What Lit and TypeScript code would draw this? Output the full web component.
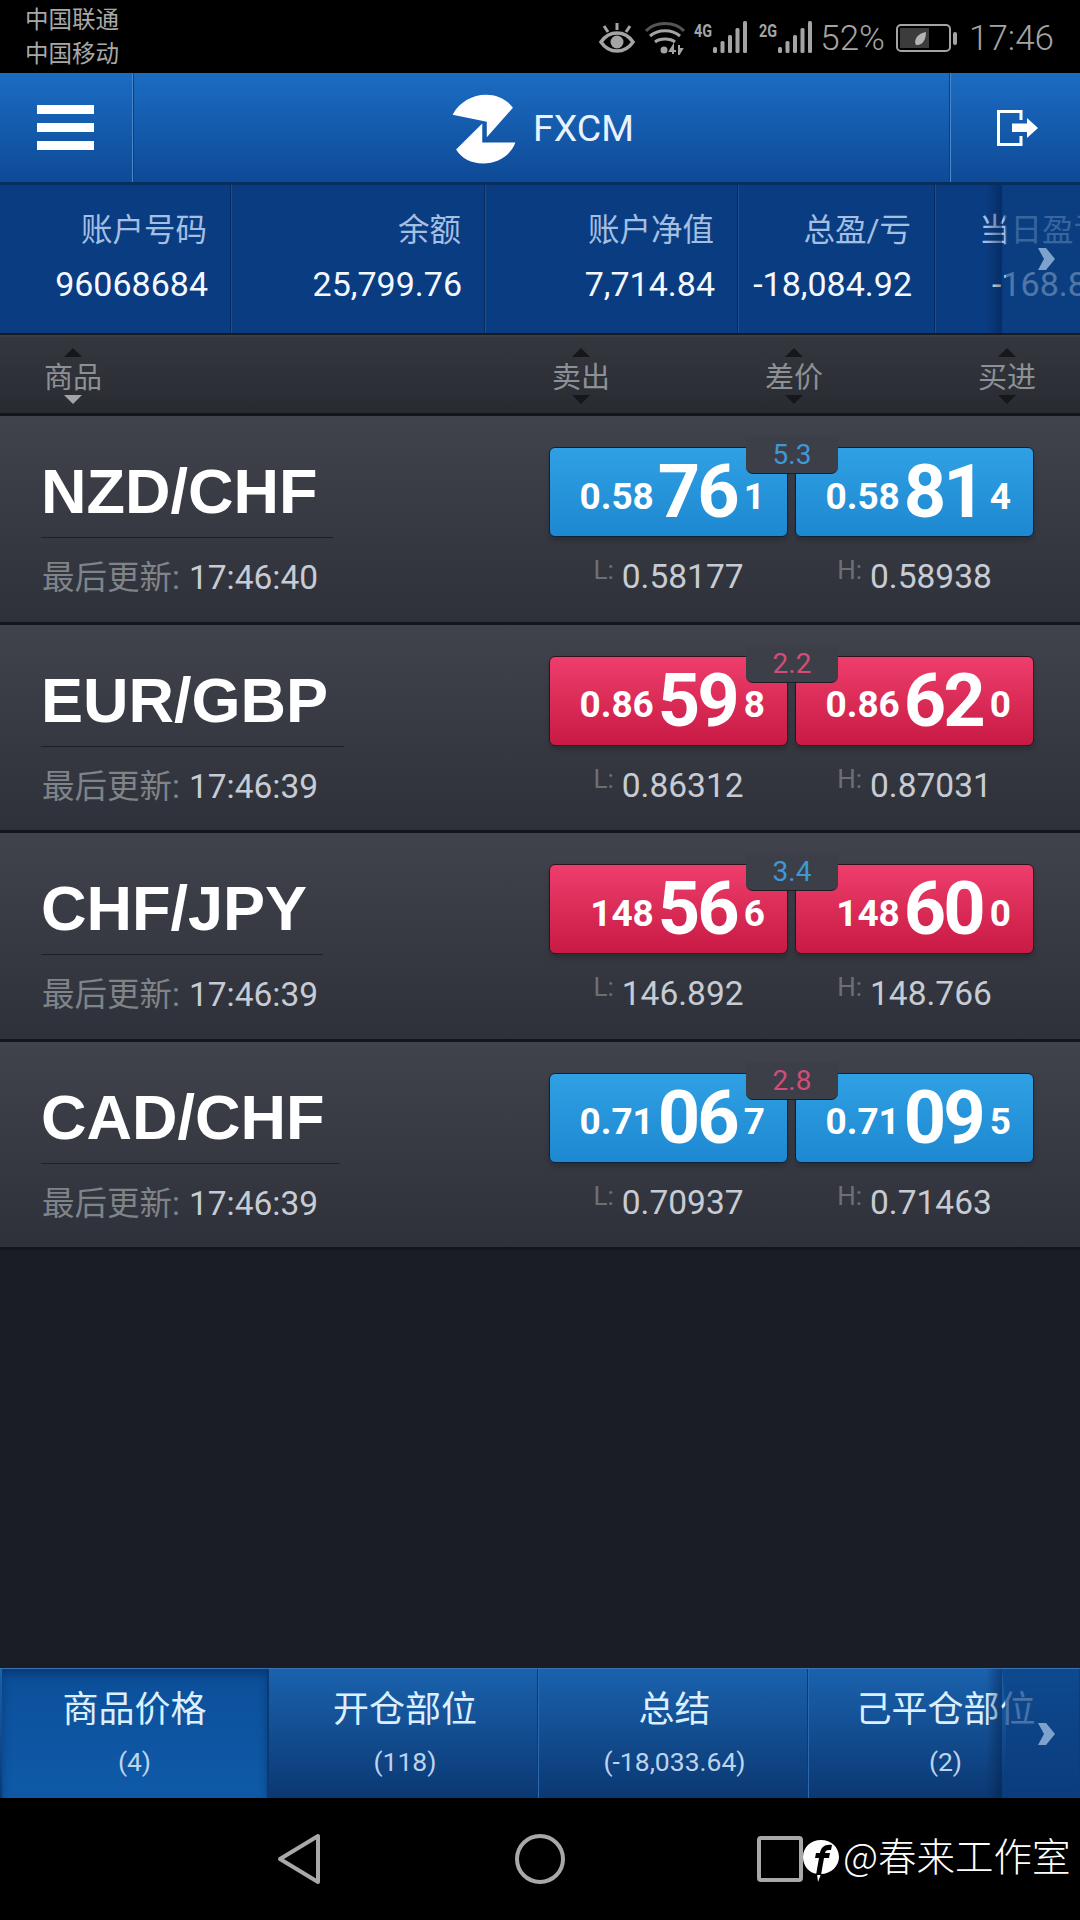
import { LitElement, html, css, svg } from 'lit';
import { customElement } from 'lit/decorators.js';

const accountStats = [
  { label: '账户号码', value: '96068684' },
  { label: '余额', value: '25,799.76' },
  { label: '账户净值', value: '7,714.84' },
  { label: '总盈/亏', value: '-18,084.92' },
  { label: '当日盈亏', value: '-168.85' },
];

const sortHeads = [
  { label: '商品', cls: 'product' },
  { label: '卖出', cls: 'sell' },
  { label: '差价', cls: '' },
  { label: '买进', cls: '' },
];

const quotes = [
  {
    pair: 'NZD/CHF', time: '17:46:40', color: 'blue', spread: '5.3', spreadColor: 'blue',
    sell: ['0.58', '76', '1'], buy: ['0.58', '81', '4'], low: '0.58177', high: '0.58938',
  },
  {
    pair: 'EUR/GBP', time: '17:46:39', color: 'red', spread: '2.2', spreadColor: 'red',
    sell: ['0.86', '59', '8'], buy: ['0.86', '62', '0'], low: '0.86312', high: '0.87031',
  },
  {
    pair: 'CHF/JPY', time: '17:46:39', color: 'red', spread: '3.4', spreadColor: 'blue',
    sell: ['148', '56', '6'], buy: ['148', '60', '0'], low: '146.892', high: '148.766',
  },
  {
    pair: 'CAD/CHF', time: '17:46:39', color: 'blue', spread: '2.8', spreadColor: 'red',
    sell: ['0.71', '06', '7'], buy: ['0.71', '09', '5'], low: '0.70937', high: '0.71463',
  },
];

const tabs = [
  { label: '商品价格', sub: '(4)', active: true },
  { label: '开仓部位', sub: '(118)', active: false },
  { label: '总结', sub: '(-18,033.64)', active: false },
  { label: '己平仓部位', sub: '(2)', active: false },
];

const signalBars = svg`
  <rect x="0" y="26" width="4" height="6" rx="1.5"/>
  <rect x="7.5" y="20" width="4" height="12" rx="1.5"/>
  <rect x="15" y="14" width="4" height="18" rx="1.5"/>
  <rect x="22.5" y="7" width="4" height="25" rx="1.5"/>
  <rect x="30" y="0" width="4" height="32" rx="1.5"/>
`;

const chevron = html`
  <svg width="17" height="24" viewBox="0 0 17 24">
    <path d="M0 1h8l9 11-9 11H0l6-11z" fill="#7fa2cd"/>
  </svg>
`;

@customElement('app-root')
export class AppRoot extends LitElement {
  static styles = css`
    :host {
      display: flex;
      flex-direction: column;
      width: 1080px;
      height: 1920px;
      overflow: hidden;
      background: #1a1d26;
      font-family: Roboto, "Noto Sans CJK SC", sans-serif;
    }
    .status {
      height: 73px;
      flex: none;
      background: #000;
      display: flex;
      justify-content: space-between;
      align-items: center;
      padding: 0 26px 0 25px;
      box-sizing: border-box;
      color: #a4a4a4;
    }
    .carriers {
      display: flex;
      flex-direction: column;
      gap: 6px;
      font-size: 23.5px;
      line-height: 28px;
      color: #a8a8a8;
    }
    .status-icons {
      display: flex;
      align-items: center;
      font-size: 35px;
      font-weight: 300;
      margin-top: 3px;
    }
    .status-icons svg { display: block; }
    .eye { margin-right: 10px; }
    .wifi { margin-right: 9px; }
    .signal { display: flex; align-items: flex-start; margin-right: 11px; }
    .signal span {
      width: 19px;
      font-size: 18px;
      line-height: 20px;
      font-weight: 700;
      transform: scaleX(.8);
      transform-origin: left top;
    }
    .signal + .signal { margin-right: 7px; }
    .percent { margin-right: 11px; }
    .battery { margin-right: 12px; }

    .header {
      height: 112px;
      flex: none;
      display: grid;
      grid-template-columns: 133px 1fr 130px;
      background: linear-gradient(#1b6cc3, #0e4a96);
      border-bottom: 3px solid #082d60;
      box-sizing: border-box;
    }
    .header > div { display: flex; align-items: center; justify-content: center; }
    .menu {
      flex-direction: column;
      gap: 9px;
      padding-right: 2px;
      border-right: 1px solid #4b86c8;
      box-shadow: 1px 0 0 #0c3e80;
    }
    .menu i { display: block; width: 57px; height: 9px; background: #fff; }
    .brand { gap: 14px; color: #e8f3ff; font-size: 37.5px; }
    .brand svg { margin-top: 3px; }
    .logout { padding-left: 4px; border-left: 1px solid #4b86c8; box-shadow: -1px 0 0 #0c3e80; }

    .stats-wrap {
      height: 150px;
      flex: none;
      position: relative;
      overflow: hidden;
      background: #0a3c81;
      border-bottom: 2px solid #161a22;
      box-sizing: border-box;
    }
    .stats {
      display: grid;
      grid-template-columns: 231px 254px 253px 197px 194px;
      height: 100%;
      width: 1129px;
    }
    .stat {
      display: flex;
      flex-direction: column;
      align-items: flex-end;
      padding: 28px 22px 0 0;
      border-right: 1px solid #062a5c;
      box-shadow: 1px 0 0 #1c4f92;
      box-sizing: border-box;
      white-space: nowrap;
    }
    .stat .label { font-size: 31.5px; line-height: 36px; margin-right: 1px; color: #a3bfe2; }
    .stat .value { font-size: 34px; line-height: 40px; margin-top: 15px; color: #f4f9ff; }

    .edge {
      position: absolute;
      top: 0;
      bottom: 0;
      right: 78px;
      width: 16px;
      background: linear-gradient(to right, rgba(4, 30, 70, 0), rgba(4, 30, 70, .5));
    }
    .scroll-hint {
      position: absolute;
      top: 0;
      bottom: 0;
      right: 0;
      width: 78px;
      display: flex;
      align-items: center;
      justify-content: center;
      padding-left: 10px;
      box-sizing: border-box;
      background: rgba(10, 62, 130, .7);
      clip-path: polygon(0 0, 3px 25%, 4px 50%, 3px 75%, 0 100%, 100% 100%, 100% 0);
    }

    .sort {
      height: 81px;
      flex: none;
      display: grid;
      grid-template-columns: 146px 1fr repeat(3, 146px);
      column-gap: 67px;
      background: linear-gradient(#34373e, #292b32);
      border-top: 2px solid #3b3e45;
      border-bottom: 3px solid #14161c;
      box-sizing: border-box;
    }
    .head {
      display: flex;
      flex-direction: column;
      align-items: center;
      justify-content: center;
      padding-top: 2px;
      font-size: 29px;
      line-height: 34px;
      color: #8d9095;
      gap: 2px;
    }
    .head span { margin: 2px 0 -2px; }
    .head.sell { grid-column: 3; }
    .head i {
      width: 0;
      height: 0;
      border-left: 9px solid transparent;
      border-right: 9px solid transparent;
    }
    .head .up { border-bottom: 9px solid #15171b; }
    .head .down { border-top: 9px solid #15171b; }
    .head.product .down { border-top-color: #a3a5a8; }

    .row {
      height: 208.5px;
      flex: none;
      box-sizing: border-box;
      display: flex;
      justify-content: space-between;
      padding: 31px 46px 0 41px;
      background: linear-gradient(#40434c, #2e3139);
      border-bottom: 3px solid #14161f;
    }
    .info { display: flex; flex-direction: column; align-items: flex-start; }
    .pair {
      font-family: "Liberation Sans", Arial, sans-serif;
      font-weight: 700;
      font-size: 63px;
      line-height: 72px;
      margin-top: 8px;
      padding: 0 16px 10px 0;
      color: #fff;
      border-bottom: 1px solid #1e2027;
    }
    .updated {
      margin: 20px 0 0 1px;
      font-size: 32.5px;
      line-height: 40px;
      color: #7f8489;
      white-space: nowrap;
    }
    .updated b { font-weight: 400; font-size: 33.5px; margin-left: 1px; color: #c7ccd4; }

    .prices {
      position: relative;
      width: 485px;
      display: grid;
      grid-template-columns: 239px 239px;
      column-gap: 7px;
      align-content: start;
    }
    .btn {
      height: 90px;
      display: flex;
      justify-content: flex-end;
      align-items: center;
      padding-right: 22px;
      box-sizing: border-box;
      border: 1px solid #0b2338;
      border-radius: 6px;
      box-shadow: 0 4px 5px rgba(0, 0, 0, .18);
      color: #fff;
      font-weight: 700;
      font-size: 37px;
    }
    .btn.blue { background: linear-gradient(#30a0e4, #1d88d0); }
    .btn.red { background: linear-gradient(#ee3e6c, #c81a44); border-color: #30121e; }
    .btn .small { margin-top: 8px; }
    .btn .big { font-size: 74px; letter-spacing: -3px; line-height: 80px; margin: 0 7px 0 4px; }
    .spread {
      position: absolute;
      top: -11px;
      left: 197px;
      width: 92px;
      height: 38px;
      box-sizing: border-box;
      border-bottom: 1px solid #1c1e25;
      border-radius: 0 0 7px 7px;
      background: #3c3f48;
      display: flex;
      justify-content: center;
      align-items: center;
      font-size: 28px;
    }
    .spread.blue { color: #3f98d6; }
    .spread.red { color: #d34d78; }
    .range {
      display: flex;
      justify-content: center;
      align-items: flex-start;
      gap: 8px;
      margin-top: 20px;
      font-size: 33.5px;
      line-height: 40px;
      color: #c7ccd4;
    }
    .range span { font-size: 26px; line-height: 26px; color: #6c7075; }

    .spacer { flex: 1; }

    .tabs-wrap {
      height: 130px;
      flex: none;
      position: relative;
      overflow: hidden;
      background: linear-gradient(#1a62ad, #0b3873);
      border-top: 1px solid #3672b4;
      box-sizing: border-box;
    }
    .tabs { display: grid; grid-template-columns: 269px 269px 270px 272px; height: 100%; }
    .tab {
      display: flex;
      flex-direction: column;
      align-items: center;
      white-space: nowrap;
      padding: 19px 0 0 4px;
      border-right: 1px solid #0c3a76;
      box-shadow: 1px 0 0 #2a69ae;
      color: #dcefff;
    }
    .tab.active {
      margin-left: 2px;
      padding-left: 0;
      background: linear-gradient(#0c4f99, #0f5aa8);
      box-shadow: inset 0 6px 8px rgba(0, 20, 60, .35);
      border-right: 2px solid #0a3a74;
    }
    .tab .name { font-size: 36px; line-height: 44px; }
    .tab .sub { font-size: 26.5px; line-height: 34px; margin-top: 13px; color: #bcd4ee; }

    .nav {
      height: 122px;
      flex: none;
      background: #000;
      display: flex;
      align-items: center;
      padding-left: 276px;
      box-sizing: border-box;
    }
    .nav svg { display: block; flex: none; }
    .circle { margin-left: 193px; }
    .square { margin-left: 192px; }
    .mark {
      display: flex;
      align-items: center;
      margin-left: -1px;
      color: #fff;
      font-family: "Noto Sans CJK SC", sans-serif;
      font-size: 38.5px;
      font-weight: 300;
      white-space: nowrap;
    }
    .mark svg { margin-top: 4px; }
    .mark span { margin: -10px 0 0 3px; }
  `;

  priceButton(parts: string[], color: string) {
    return html`
      <div class="btn ${color}">
        <span class="small">${parts[0]}</span>
        <span class="big">${parts[1]}</span>
        <span class="small">${parts[2]}</span>
      </div>
    `;
  }

  renderStatus() {
    return html`
      <div class="status">
        <div class="carriers"><span>中国联通</span><span>中国移动</span></div>
        <div class="status-icons">
          <svg class="eye" width="36" height="32" viewBox="0 0 36 32" fill="none" stroke="#a4a4a4">
            <path d="M2 20c4-6 9-9 16-9s12 3 16 9c-4 6-9 9-16 9S6 26 2 20z" stroke-width="3.5"/>
            <circle cx="18" cy="20" r="6.5" fill="#a4a4a4" stroke="none"/>
            <path d="M18 1v7M5 4l4 6M31 4l-4 6" stroke-width="3"/>
          </svg>
          <svg class="wifi" width="40" height="34" viewBox="0 0 40 34" fill="none" stroke="#a4a4a4" stroke-width="3">
            <path d="M1 10C10 0 30 0 39 10" stroke="#555"/>
            <path d="M5 15c8-7 22-7 30 0M10 21c5-4 15-4 20 0"/>
            <circle cx="19" cy="29" r="3.5" fill="#a4a4a4" stroke="none"/>
            <path d="M28 33v-8l-3 5h6M34 24v9l3-5h-3" stroke-width="2"/>
          </svg>
          <div class="signal">
            <span>4G</span>
            <svg width="35" height="34" viewBox="0 0 35 34" fill="#a4a4a4">${signalBars}</svg>
          </div>
          <div class="signal">
            <span>2G</span>
            <svg width="35" height="34" viewBox="0 0 35 34" fill="#a4a4a4">${signalBars}</svg>
          </div>
          <span class="percent">52%</span>
          <svg class="battery" width="61" height="28" viewBox="0 0 61 28">
            <rect x="1" y="1" width="53" height="26" rx="4" fill="none" stroke="#a4a4a4" stroke-width="2"/>
            <rect x="4" y="4" width="29" height="20" fill="#3c3c3c"/>
            <path d="M20 21c-3-5 2-12 10-13 0 8-4 14-10 13z" fill="#b4b4b4"/>
            <rect x="57" y="8" width="4" height="13" rx="2" fill="#a4a4a4"/>
          </svg>
          <span>17:46</span>
        </div>
      </div>
    `;
  }

  renderHeader() {
    return html`
      <div class="header">
        <div class="menu"><i></i><i></i><i></i></div>
        <div class="brand">
          <svg width="70" height="75" viewBox="60 40 200 215" fill="#fff">
            <path d="M70 105C90 68 128 48 165 48c32 0 60 13 78 37l-75 85v-45z"/>
            <path d="M155 130v55h95c-14 38-52 60-92 60-34 0-62-14-78-40z"/>
          </svg>
          <span>FXCM</span>
        </div>
        <div class="logout">
          <svg width="42" height="36" viewBox="0 0 42 36" fill="none" stroke="#fff" stroke-width="3">
            <path d="M24 10V1.5H1.5v33H24V26"/>
            <path d="M15 13.5h15V8l11 10-11 10v-6H15z" fill="#fff" stroke="none"/>
          </svg>
        </div>
      </div>
    `;
  }

  renderStats() {
    return html`
      <div class="stats-wrap">
        <div class="stats">
          ${accountStats.map(s => html`
            <div class="stat">
              <span class="label">${s.label}</span>
              <span class="value">${s.value}</span>
            </div>
          `)}
        </div>
        <div class="edge"></div>
        <div class="scroll-hint">${chevron}</div>
      </div>
    `;
  }

  renderSort() {
    return html`
      <div class="sort">
        ${sortHeads.map(h => html`
          <div class="head ${h.cls}">
            <i class="up"></i>
            <span>${h.label}</span>
            <i class="down"></i>
          </div>
        `)}
      </div>
    `;
  }

  renderRow(q: typeof quotes[number]) {
    return html`
      <div class="row">
        <div class="info">
          <div class="pair">${q.pair}</div>
          <div class="updated">最后更新: <b>${q.time}</b></div>
        </div>
        <div class="prices">
          ${this.priceButton(q.sell, q.color)}
          ${this.priceButton(q.buy, q.color)}
          <div class="spread ${q.spreadColor}">${q.spread}</div>
          <div class="range"><span>L:</span>${q.low}</div>
          <div class="range"><span>H:</span>${q.high}</div>
        </div>
      </div>
    `;
  }

  renderTabs() {
    return html`
      <div class="tabs-wrap">
        <div class="tabs">
          ${tabs.map(t => html`
            <div class="tab ${t.active ? 'active' : ''}">
              <span class="name">${t.label}</span>
              <span class="sub">${t.sub}</span>
            </div>
          `)}
        </div>
        <div class="edge"></div>
        <div class="scroll-hint">${chevron}</div>
      </div>
    `;
  }

  renderNav() {
    return html`
      <div class="nav">
        <svg width="46" height="52" viewBox="0 0 46 52" fill="none" stroke="#a8a8a8" stroke-width="4" stroke-linejoin="round">
          <path d="M42 3v46L4 26z"/>
        </svg>
        <svg class="circle" width="50" height="50" viewBox="0 0 50 50" fill="none" stroke="#a8a8a8" stroke-width="4">
          <circle cx="25" cy="25" r="23"/>
        </svg>
        <svg class="square" width="46" height="46" viewBox="0 0 46 46" fill="none" stroke="#a8a8a8" stroke-width="4">
          <rect x="2" y="2" width="42" height="42" rx="2"/>
        </svg>
        <div class="mark">
          <svg width="38" height="44" viewBox="0 0 38 44">
            <path d="M19 1c10 0 18 7 18 17 0 9-8 17-18 17l-3 8-1-8C7 34 1 27 1 18 1 8 9 1 19 1z" fill="#fff"/>
            <path d="M14 36l3-17h-4l1-5h4c1-6 5-9 12-8l-1 5c-4 0-5 0-6 3h5l-1 5h-5l-3 17z" fill="#000"/>
          </svg>
          <span>@春来工作室</span>
        </div>
      </div>
    `;
  }

  render() {
    return html`
      ${this.renderStatus()}
      ${this.renderHeader()}
      ${this.renderStats()}
      ${this.renderSort()}
      ${quotes.map(q => this.renderRow(q))}
      <div class="spacer"></div>
      ${this.renderTabs()}
      ${this.renderNav()}
    `;
  }
}
